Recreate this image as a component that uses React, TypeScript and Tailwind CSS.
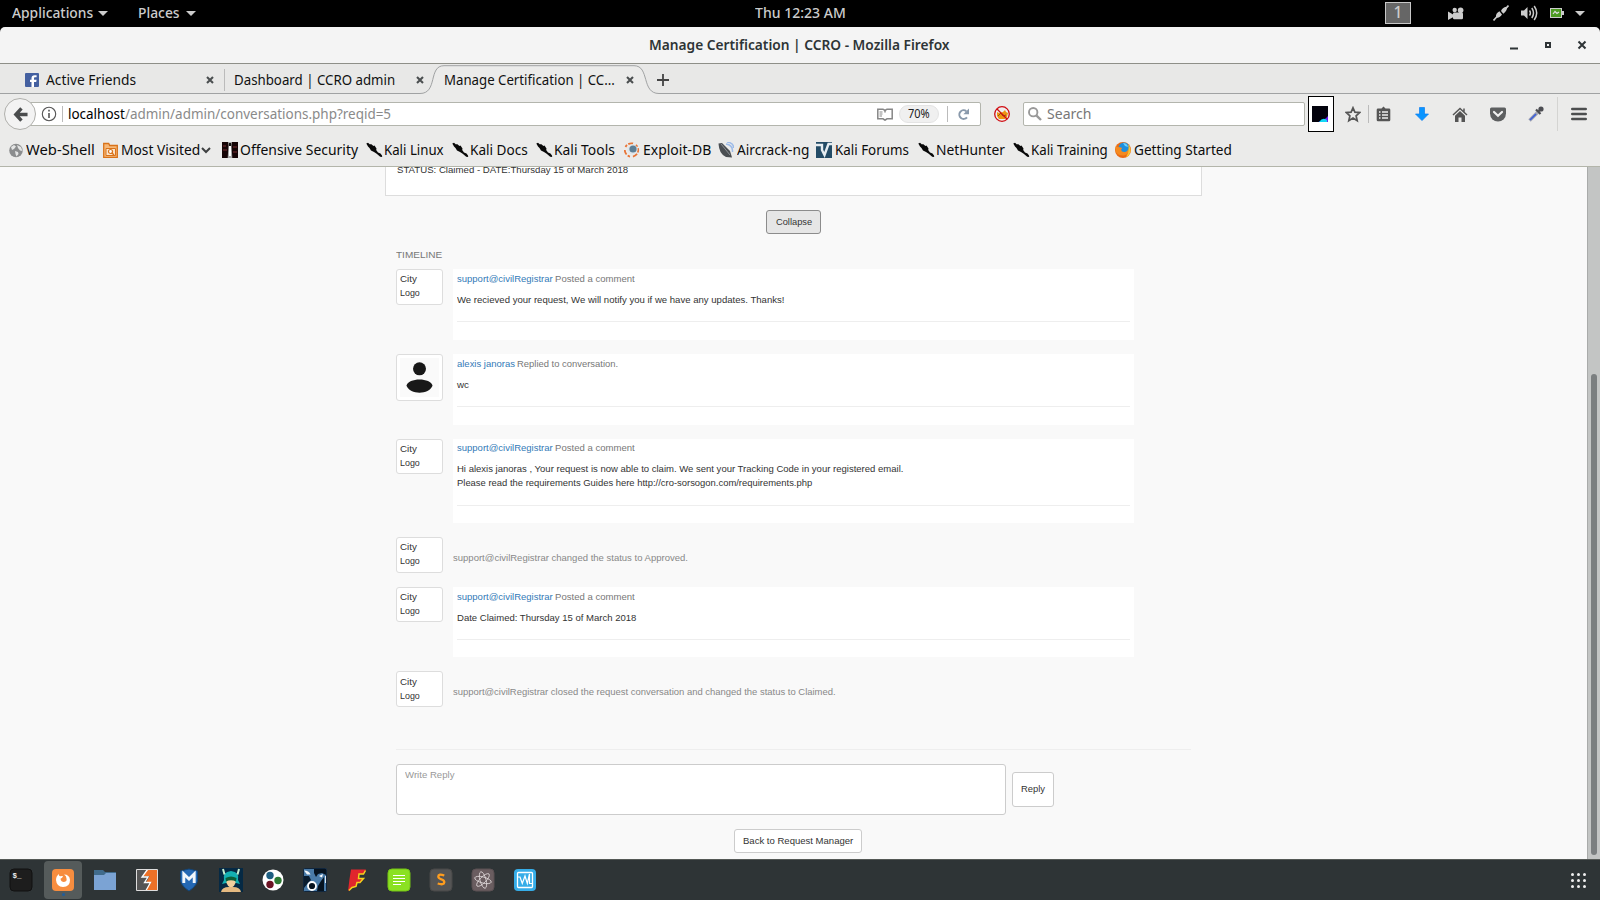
import { useLayoutEffect, useRef, useState } from "react";
import type { ReactNode } from "react";

/* Text squeezed or stretched horizontally so that it occupies exactly `w` pixels. */
function Fit({ w, className = "", children }: { w: number; className?: string; children: ReactNode }) {
  const ref = useRef<HTMLSpanElement>(null);
  const [scale, setScale] = useState(1);
  useLayoutEffect(() => {
    if (ref.current && ref.current.offsetWidth) setScale(w / ref.current.offsetWidth);
  }, [w]);
  return (
    <span className={`block shrink-0 whitespace-nowrap ${className}`} style={{ width: w }}>
      <span ref={ref} className="inline-block origin-left" style={{ transform: `scaleX(${scale})` }}>
        {children}
      </span>
    </span>
  );
}

const Caret = ({ className = "" }: { className?: string }) => (
  <svg className={`h-[5px] w-[10px] shrink-0 ${className}`} viewBox="0 0 10 5"><path d="M0 0h10L5 5z" fill="#ccc" /></svg>
);

function TopBar() {
  return (
    <header className="flex h-[27px] shrink-0 items-center bg-black text-[14.5px] leading-[26px] font-medium text-[#ccc]">
      <Fit w={81} className="-mt-[3px] ml-[12px]">Applications</Fit>
      <Caret className="ml-[5px]" />
      <Fit w={42} className="-mt-[3px] ml-[30px]">Places</Fit>
      <Caret className="ml-[6px]" />
      <Fit w={91} className="-mt-[3px] ml-[559px]">Thu 12:23 AM</Fit>
      <div className="-mt-[1px] ml-[539px] flex h-[22px] w-[26px] items-center justify-center border border-[#c8c8c8] bg-[#666] pb-[2px] text-[15.5px]">1</div>
      <svg className="ml-[37px] h-[14px] w-[16px] shrink-0" viewBox="0 0 16 14" fill="#ccc">
        <circle cx="6.7" cy="3" r="2.2" /><circle cx="12.6" cy="3.2" r="2.8" />
        <rect x="5" y="5.5" width="10" height="6.8" rx="1.2" /><path d="M0 4.5l5.5 3.2v2.2L0 13z" />
      </svg>
      <svg className="-mt-[2px] ml-[29px] h-[16px] w-[16px] shrink-0" viewBox="0 0 16 16">
        <path d="M0.5 15.5L5 10.500M11 5.500L15.500 0.500" stroke="#ccc" strokeWidth="1.600" />
        <path d="M3 12.500c-.4-3 .8-4.600 3.400-6.200l2.600 3.200C7.600 12 5.600 13 3 12.500zM8 6c1-2.500 3-4.200 6.200-4.200C14 5 12.800 7 10.300 8.700z" fill="#ccc" />
      </svg>
      <svg className="-mt-[1px] ml-[12px] h-[16px] w-[17px] shrink-0" viewBox="0 0 17 16" fill="none" stroke="#ccc" strokeWidth="1.500">
        <path d="M0 5.500h3L6.500 2v12L3 10.500H0z" fill="#ccc" stroke="none" />
        <path d="M8.500 5.500q1.800 2.500 0 5M10.800 3q3.400 5 0 10M13.200 1q5 7 0 14" />
      </svg>
      <svg className="-mt-[1px] ml-[12px] h-[10px] w-[14px] shrink-0" viewBox="0 0 14 10">
        <rect x=".5" y=".5" width="11" height="9" fill="#4c9a22" stroke="#ccc" /><rect x="12" y="3" width="2" height="4" fill="#ccc" />
        <path d="M3 6l2-2.500 2 2L9 4" stroke="#ddd" fill="none" strokeWidth="1.200" />
      </svg>
      <Caret className="ml-[11px]" />
    </header>
  );
}

function TitleBar() {
  return (
    <div className="shrink-0 bg-black">
      <div className="flex h-[37px] items-center rounded-t-[5px] border-b border-[#8e8f88] bg-[#f4f4f4]">
        <Fit w={301} className="ml-[649px] text-[14.5px] font-semibold text-[#2e3436]">Manage Certification | CCRO - Mozilla Firefox</Fit>
        <svg className="ml-[560px] h-[10px] w-[77px] shrink-0" viewBox="0 0 77 10" fill="none" stroke="#2e3436" strokeWidth="2">
          <path d="M0 8.500h8" /><rect x="36" y="3" width="4" height="4" /><path d="M68.500 1.500l7 7M75.500 1.500l-7 7" />
        </svg>
      </div>
    </div>
  );
}

const TabClose = ({ className = "" }: { className?: string }) => (
  <svg className={`h-[8px] w-[8px] shrink-0 ${className}`} viewBox="0 0 8 8"><path d="M1 1l6 6M7 1L1 7" stroke="#4b4f50" strokeWidth="2.100" /></svg>
);

function Tabs() {
  return (
    <div className="relative h-[30px] shrink-0 bg-[#e8e8e7]">
      <svg className="absolute inset-0 h-[30px] w-[1600px]" viewBox="0 0 1600 30">
        <path d="M420 30c18 0 10-28.500 24-28.500h190c15 0 9 28.500 25 28.500z" fill="#ebebea" />
        <path d="M0 29.500H420c18 0 8-27.800 24-27.800h190c16 0 7 27.800 25 27.800H1600" fill="none" stroke="#a0a2a3" />
      </svg>
      <div className="relative flex h-[32px] items-center text-[15px] text-[#111]">
        <svg className="ml-[25px] h-[14px] w-[14px] shrink-0" viewBox="0 0 14 14">
          <rect width="14" height="14" rx="1" fill="#4460a0" /><path d="M9 14V9h2.200l.4-2.200H9V5.400c0-.7.3-1.100 1.200-1.100h1.400V2.200H9.700C7.600 2.200 6.500 3.300 6.500 5v1.800H5V9h1.500v5z" fill="#fff" />
        </svg>
        <Fit w={90} className="-mt-[2px] ml-[7px]">Active Friends</Fit>
        <TabClose className="ml-[70px]" />
        <div className="ml-[10px] h-[22px] w-px bg-[#bbb]" />
        <Fit w={161} className="-mt-[2px] ml-[9px]">Dashboard | CCRO admin</Fit>
        <TabClose className="ml-[21px]" />
        <Fit w={171} className="-mt-[2px] ml-[20px]">Manage Certification | CC...</Fit>
        <TabClose className="ml-[11px]" />
        <svg className="ml-[23px] h-[12px] w-[12px]" viewBox="0 0 12 12"><path d="M6 0v12M0 6h12" stroke="#444" strokeWidth="1.800" /></svg>
      </div>
    </div>
  );
}

function NavBar() {
  return (
    <div className="flex h-[40px] shrink-0 items-center">
      <div className="relative z-10 ml-[4px] flex h-[32px] w-[32px] shrink-0 items-center justify-center rounded-full border border-[#b0b0ac] bg-[#f3f3f3]">
        <svg className="h-[15px] w-[15px]" viewBox="0 0 16 16" fill="none" stroke="#4a4c4d" strokeWidth="3.600"><path d="M9 1.500L3 8l6 6.500M3 8h12.500" /></svg>
      </div>
      <div className="-ml-[6px] flex h-[24px] w-[951px] shrink-0 items-center rounded-r-[2px] border border-[#b3b5ad] bg-white">
        <svg className="ml-[10px] h-[16px] w-[16px] shrink-0" viewBox="0 0 16 16"><circle cx="8" cy="8" r="6.700" fill="none" stroke="#555" strokeWidth="1.100" /><path d="M8 3.800v1.700M8 7v5" stroke="#555" strokeWidth="1.600" /></svg>
        <div className="ml-[5px] h-[16px] w-px shrink-0 bg-[#bbb]" />
        <Fit w={323} className="-mt-[2px] ml-[5px] text-[15px] text-[#8a8a8a]"><span className="text-black">localhost</span>/admin/admin/conversations.php?reqid=5</Fit>
        <svg className="ml-[486px] h-[13px] w-[16px] shrink-0" viewBox="0 0 16 13" fill="none" stroke="#868686" strokeWidth="1.500">
          <path d="M.8 1.200H6L8 2.500l2-1.300h5.200v9.600H10L8 12.200 6 10.800H.8zM8 2.500v2" /><path d="M2.500 4h3M2.500 6h3M2.500 8h2.500" strokeWidth="1" />
        </svg>
        <div className="ml-[6px] flex h-[18px] w-[40px] shrink-0 items-center justify-center rounded-full border border-[#e4e4e4] bg-[#f0f0f0] text-[12.500px] text-[#222]"><Fit w={22}>70%</Fit></div>
        <div className="ml-[8px] h-[16px] w-px shrink-0 bg-[#bbb]" />
        <svg className="ml-[9px] h-[13px] w-[13px] shrink-0" viewBox="0 0 13 13"><path d="M9.300 3.200A4.300 4.300 0 1 0 10 9.300" fill="none" stroke="#8999ab" strokeWidth="2" /><path d="M12 .5v5.700H6.300z" fill="#8999ab" /></svg>
      </div>
      <svg className="ml-[13px] h-[16px] w-[16px] shrink-0" viewBox="0 0 16 16">
        <circle cx="8" cy="8" r="7.500" fill="#eee" /><path d="M3 6l2 1 4-1 2-2 1 2 2 1-1 4-2 2H5l-2-3z" fill="#ee9411" /><path d="M4 10l3-3 2 3 3-1" stroke="#8a5515" fill="none" />
        <circle cx="8" cy="8" r="7.300" fill="none" stroke="#d00c12" strokeWidth="1.300" /><path d="M3 3l10 10" stroke="#d00c12" strokeWidth="1.200" />
      </svg>
      <div className="ml-[13px] flex h-[24px] w-[282px] shrink-0 items-center rounded-[2px] border border-[#b3b5ad] bg-white">
        <svg className="ml-[4px] h-[14px] w-[14px] shrink-0" viewBox="0 0 14 14" fill="none" stroke="#999"><circle cx="5.200" cy="5.200" r="4.200" strokeWidth="1.900" /><path d="M8.300 8.300l4.700 4.700" strokeWidth="2.400" /></svg>
        <Fit w={44} className="-mt-[2px] ml-[5px] text-[15px] text-[#777]">Search</Fit>
      </div>
      <div className="ml-[3px] flex h-[36px] w-[26px] shrink-0 items-center border border-black bg-white pl-[3px]">
        <svg className="h-[16px] w-[16px]" viewBox="0 0 16 16"><rect width="16" height="16" fill="#03020c" /><path d="M16 10v6H6q6-1 10-6z" fill="#6a19f0" /><path d="M7 16q3-4 6-3t2 3z" fill="#12d8f5" /></svg>
      </div>
      <svg className="ml-[11px] h-[17px] w-[16px] shrink-0" viewBox="0 0 16 17"><path d="M8 1.800l1.900 4.400 4.800.4-3.600 3.200 1.100 4.900L8 12.100l-4.200 2.600 1.100-4.900L1.300 6.600l4.800-.4z" fill="none" stroke="#555" strokeWidth="1.700" /></svg>
      <div className="ml-[7px] h-[18px] w-px shrink-0 bg-[#bbb]" />
      <svg className="ml-[7px] h-[16px] w-[15px] shrink-0" viewBox="0 0 15 16"><path d="M2 2.500h3.500L7.500.500l2 2H13q1.300 0 1.300 1.200V14q0 1.200-1.300 1.200H2Q.700 15.200.700 14V3.700Q.700 2.500 2 2.500z" fill="#555" /><path d="M3 6h1.500M6 6h6M3 9h1.500M6 9h6M3 12h1.500M6 12h6" stroke="#eee" strokeWidth="1.700" /></svg>
      <svg className="ml-[24px] h-[14px] w-[14px] shrink-0" viewBox="0 0 14 14"><path d="M4.500 .5h5V7h4L7 13.600.5 7h4z" fill="#0a95ff" stroke="#0a7cf0" strokeWidth=".7" /></svg>
      <svg className="ml-[23px] h-[15px] w-[16px] shrink-0" viewBox="0 0 16 15" fill="none" stroke="#555"><path d="M1 8l7-6.500L15 8M12 1.500v3.200" strokeWidth="1.500" /><path d="M3 8.700L8 4l5 4.700V15H9.500v-4.500h-3V15H3z" fill="#555" stroke="none" /></svg>
      <svg className="ml-[22px] h-[15px] w-[16px] shrink-0" viewBox="0 0 16 15"><path d="M1.500 .5h13q1.500 0 1.500 1.500v4.500a8 8 0 0 1-16 0V2Q0 .5 1.500 .5z" fill="#5d5f60" /><path d="M4 5l4 3.700L12 5" stroke="#f0f0f0" strokeWidth="2.200" fill="none" strokeLinecap="round" /></svg>
      <svg className="ml-[22px] h-[16px] w-[16px] shrink-0" viewBox="0 0 16 16"><path d="M1.500 14.500L9.500 6.500" stroke="#a4a6b2" strokeWidth="3.400" /><path d="M2 14l6-6" stroke="#3d5fd8" strokeWidth="1.700" /><path d="M8 3.500l4.500 4.500M10 6l4-4" stroke="#4c4d52" strokeWidth="2.200" /><circle cx="13" cy="3" r="2.600" fill="#4c4d52" /></svg>
      <div className="ml-[13px] h-[34px] w-px shrink-0 bg-[#d4d4d2]" />
      <svg className="ml-[13px] h-[14px] w-[16px] shrink-0" viewBox="0 0 16 14"><path d="M1.300 2h13.400M1.300 7h13.400M1.300 12h13.400" stroke="#4c4e4f" strokeWidth="2.600" strokeLinecap="round" /></svg>
    </div>
  );
}

const Kali = () => (
  <svg className="h-[16px] w-[17px] shrink-0" viewBox="0 0 17 16">
    <path d="M.3 1.500L2 .8l2 1.700 1-.6 2.500 2 1-.4 2 3-.3 1.500 1.800 2.500 2.500 1 1.500 2 .2 1.500-2-.3-3.500-3-2.700-1.800-3-1.500L3.500 6 2 4.500z" fill="#090909" />
  </svg>
);

const bookmarks: { label: string; w: number; gap: number; icon: ReactNode }[] = [
  { label: "Web-Shell", w: 69, gap: 9, icon: (
    <svg className="mr-[1px] h-[15px] w-[15px]" viewBox="0 0 15 15"><circle cx="7" cy="7.500" r="6.800" fill="#8b8d8e" /><path d="M2 4l3-2 2 1.500L5 6 3 7zM8 2l4 2 1.500 4L11 7.500 9 5zM6 8l3 1 .5 2-2 2.500-1-2.500z" fill="#e4e5e5" /></svg>) },
  { label: "Most Visited", w: 79, gap: 8, icon: (
    <svg className="mr-[2px] h-[16px] w-[15px]" viewBox="0 0 15 16"><path d="M.7 1.500h5l1 2h7.600v11.800H.7z" fill="#f6b878" stroke="#d9731a" strokeWidth="1.300" /><path d="M3 6.500h9.500v7H3z" fill="#fbe4ca" stroke="#d9731a" /><circle cx="7.500" cy="9.500" r="2" fill="#fff" stroke="#d9731a" strokeWidth="1.200" /><path d="M9 11l2 2" stroke="#d9731a" strokeWidth="1.400" /></svg>) },
  { label: "Offensive Security", w: 118, gap: 11, icon: (
    <svg className="mr-[1px] h-[16px] w-[16px]" viewBox="0 0 16 16"><rect width="16" height="16" fill="#160506" /><path d="M1 4h3M1 8h4M11 5h4M11 10h4" stroke="#5a2226" strokeWidth="1.500" /><path d="M6 0h4L9.500 3l.8 13H5.700l.8-13z" fill="#aaa" /><path d="M7 3.500h2V14H7z" fill="#fff" /><path d="M7 1h2v3H7z" fill="#111" /></svg>) },
  { label: "Kali Linux", w: 60, gap: 8, icon: <Kali /> },
  { label: "Kali Docs", w: 58, gap: 8, icon: <Kali /> },
  { label: "Kali Tools", w: 61, gap: 8, icon: <Kali /> },
  { label: "Exploit-DB", w: 68, gap: 9, icon: (
    <svg className="mr-[2px] h-[16px] w-[16px]" viewBox="0 0 16 16"><circle cx="7.500" cy="8" r="6.700" fill="none" stroke="#e87537" strokeWidth="1.800" strokeDasharray="2.500 1.500 5 3" /><circle cx="8.500" cy="7.500" r="5" fill="#dfe6ea" /><circle cx="9" cy="7" r="3.600" fill="#5d7f96" /></svg>) },
  { label: "Aircrack-ng", w: 72, gap: 7, icon: (
    <svg className="mr-[2px] h-[16px] w-[16px]" viewBox="0 0 16 16"><path d="M8 2q7 1 6.500 8M9 0q7 1 6.500 6" stroke="#9dbbe8" strokeWidth="1.500" fill="none" /><path d="M.5 1.500L4 1l8 8 2 6.500-6-.5Q1 12 .5 1.500z" fill="#4a4e52" /><path d="M3 2l9 11" stroke="#8a8e92" /></svg>) },
  { label: "Kali Forums", w: 74, gap: 7, icon: (
    <svg className="mr-[2px] h-[16px] w-[16px]" viewBox="0 0 16 16"><rect width="16" height="16" fill="#234b66" /><path d="M0 3h6v5l2.500 5L12.500 2H16" fill="none" stroke="#e6edf2" strokeWidth="2.400" /></svg>) },
  { label: "NetHunter", w: 69, gap: 9, icon: <Kali /> },
  { label: "Kali Training", w: 77, gap: 8, icon: <Kali /> },
  { label: "Getting Started", w: 98, gap: 7, icon: (
    <svg className="mr-[2px] h-[16px] w-[16px]" viewBox="0 0 16 16"><circle cx="8" cy="8" r="8" fill="#ea6a14" /><circle cx="9" cy="6" r="5.500" fill="#1e8fdd" /><path d="M8 1q4 0 5 4l-3-1z" fill="#6fd0f7" /><path d="M1 3q0 2 2 2l3 .5q2 .5 0 2 .5 3 4 2.500 3-.5 3.500-4.500Q15 12 9 13.500 2 14 .3 8.500z" fill="#f58a1f" /><path d="M13 2q4 5 2 9-1 3-4 4 4-5 2-13z" fill="#fbc52d" /></svg>) },
];

function Bookmarks() {
  return (
    <div className="flex h-[32px] shrink-0 items-center text-[15px] text-[#0c0c0c]">
      {bookmarks.map((b) => (
        <div key={b.label} className="flex shrink-0 items-center" style={{ marginLeft: b.gap }}>
          <span className="mr-px block shrink-0">{b.icon}</span>
          <Fit w={b.w} className="-mt-[2px]">{b.label}</Fit>
          {b.label === "Most Visited" && <svg className="ml-[1px] h-[7px] w-[10px]" viewBox="0 0 10 7"><path d="M1 1l4 4 4-4" fill="none" stroke="#3e4041" strokeWidth="2" /></svg>}
        </div>
      ))}
    </div>
  );
}

const Logo = ({ h = "h-[36px]", pad = "pt-[2px]" }: { h?: string; pad?: string }) => (
  <div className={`w-[47px] shrink-0 rounded-[3px] border border-[#ddd] bg-white pl-[3px] ${h} ${pad}`}>
    <Fit w={17}>City</Fit>
    <Fit w={20}>Logo</Fit>
  </div>
);

const Avatar = () => (
  <div className="h-[47px] w-[47px] shrink-0 rounded-[3px] border border-[#ddd] bg-white p-[3px]">
    <svg className="h-[39px] w-[39px] bg-[#fafafa]" viewBox="0 0 39 39" fill="#181818"><circle cx="19.500" cy="10.800" r="6.500" /><path d="M6.500 27.800C8 19.500 31 19.500 32.500 27.800 29 37 10 37 6.500 27.800z" /></svg>
  </div>
);

type PostProps = { h: string; who: string; whoW: number; act: string; actW: number; lines: [string, number][]; pad?: string; rule?: string };
function Post({ h, who, whoW, act, actW, lines, pad = "pt-[3px]", rule = "mt-[14px]" }: PostProps) {
  return (
    <div className={`w-[681px] bg-white px-[4px] ${h} ${pad}`}>
      <div className="flex gap-[2px]">
        <Fit w={whoW} className="text-[#337ab7]">{who}</Fit>
        <Fit w={actW} className="text-[#777]">{act}</Fit>
      </div>
      <div className="mt-[7px]">{lines.map(([t, w]) => <Fit key={t} w={w}>{t}</Fit>)}</div>
      <div className={`h-px bg-[#eee] ${rule}`} />
    </div>
  );
}

function Page() {
  return (
    <main className="flex min-h-0 flex-1 overflow-hidden bg-[#f9f9f9] font-['Liberation_Sans',sans-serif] text-[9.8px] leading-[14px] text-[#333]">
      <div className="ml-[385px] flex w-[817px] shrink-0 flex-col">
        <div className="h-[29px] shrink-0 border-x border-b border-[#ddd] bg-white pl-[11px]">
          <Fit w={231} className="-mt-[4px]">STATUS: Claimed - DATE:Thursday 15 of March 2018</Fit>
        </div>
        <button className="mt-[14px] ml-[381px] flex h-[24px] w-[55px] shrink-0 items-center justify-center rounded-[3px] border border-[#8c8c8c] bg-[#e6e6e6]"><Fit w={36}>Collapse</Fit></button>
        <Fit w={46} className="mt-[14px] ml-[11px] text-[#777]">TIMELINE</Fit>
        <section className="mt-[7px] ml-[11px] flex flex-col gap-[14px]">
          <div className="flex gap-[10px]"><Logo /><Post h="h-[71px]" who="support@civilRegistrar" whoW={96} act="Posted a comment" actW={80} lines={[["We recieved your request, We will notify you if we have any updates. Thanks!", 327]]} /></div>
          <div className="flex gap-[10px]"><Avatar /><Post h="h-[71px]" who="alexis janoras" whoW={58} act="Replied to conversation." actW={101} lines={[["wc", 12]]} /></div>
          <div className="flex gap-[10px]"><Logo h="h-[35px]" /><Post h="h-[84px]" who="support@civilRegistrar" whoW={96} act="Posted a comment" actW={80} pad="pt-[2px]" rule="mt-[15px]" lines={[["Hi alexis janoras , Your request is now able to claim. We sent your Tracking Code in your registered email.", 446], ["Please read the requirements Guides here http://cro-sorsogon.com/requirements.php", 355]]} /></div>
          <div className="flex gap-[10px] text-[#888]"><div className="text-[#333]"><Logo /></div><Fit w={235} className="mt-[14px]">support@civilRegistrar changed the status to Approved.</Fit></div>
          <div className="flex gap-[10px]"><Logo h="h-[35px]" /><Post h="h-[70px]" who="support@civilRegistrar" whoW={96} act="Posted a comment" actW={80} lines={[["Date Claimed: Thursday 15 of March 2018", 179]]} /></div>
          <div className="flex gap-[10px] text-[#888]"><div className="text-[#333]"><Logo pad="pt-[3px]" /></div><Fit w={383} className="mt-[14px]">support@civilRegistrar closed the request conversation and changed the status to Claimed.</Fit></div>
        </section>
        <div className="mt-[42px] ml-[11px] h-px w-[795px] shrink-0 bg-[#eee]" />
        <div className="mt-[14px] ml-[11px] flex shrink-0 gap-[6px]">
          <div className="h-[51px] w-[610px] rounded-[3px] border border-[#ccc] bg-white pt-[3px] pl-[8px] text-[#999]"><Fit w={49}>Write Reply</Fit></div>
          <button className="mt-[8px] flex h-[35px] w-[42px] items-center justify-center rounded-[3px] border border-[#ccc] bg-white pb-[1px]"><Fit w={24}>Reply</Fit></button>
        </div>
        <button className="mt-[14px] ml-[349px] flex h-[24px] w-[128px] shrink-0 items-center justify-center rounded-[3px] border border-[#ccc] bg-white"><Fit w={110}>Back to Request Manager</Fit></button>
      </div>
      <div className="ml-auto w-[13px] border-l border-[#a9abaa] bg-[#c3c5c4] pt-[207px] pl-[3px]"><div className="h-[481px] w-[6px] rounded-full bg-[#7b7f80]" /></div>
    </main>
  );
}

const ico = "h-[24px] w-[24px]";
const dock: ReactNode[] = [
  <svg className={ico} viewBox="0 0 24 24"><rect x="1" y="1" width="22" height="22" rx="4" fill="#1d1d1d" stroke="#111" /><text x="3.500" y="10" fontSize="7.500" fontWeight="700" fill="#eee" fontFamily="Liberation Mono">$_</text></svg>,
  <svg className={ico} viewBox="0 0 24 24"><rect x="1" y="1" width="22" height="22" rx="4" fill="#f78d3f" /><path d="M5 12q0-4 3-6-.5 2 1 2.300 1.500-.5 3-.3-.5 2-2.500 2.700.5 3.300 3.500 3.300 3.300-.5 2.500-3.500 0-2.500-2.500-4 5.500 0 6 5.500 0 7-7 7-6.500-.5-7-7z" fill="#fff" /></svg>,
  <svg className={ico} viewBox="0 0 24 24"><path d="M1 2h9l2 2h11v18H1z" fill="#406b8c" /><path d="M1 7h10l2-2h10v17H1z" fill="#7ba3d4" /></svg>,
  <svg className={ico} viewBox="0 0 24 24"><path d="M1.500 1.500h21v21h-21z" fill="#555" /><path d="M12.500 2H22v20H11l5.500-8h-5l3-6H8z" fill="#ed7127" /><path d="M12.500 1.500L7 9h6l-3.500 5.500h6l-4.500 8" fill="none" stroke="#fff" strokeWidth="1.300" /><path d="M1.500 1.500h21v21h-21z" fill="none" stroke="#ddd" /></svg>,
  <svg className={ico} viewBox="0 0 24 24"><path d="M12 1l8.500 2v10q-1 5-8.500 10-7.500-5-8.500-10V3z" fill="#2468b4" stroke="#124579" /><path d="M6.800 15V6l5.200 5 5.200-5v9" fill="none" stroke="#f1f6fb" strokeWidth="2.900" /></svg>,
  <svg className={ico} viewBox="0 0 24 24"><rect width="24" height="24" fill="#052944" /><path d="M5 12Q3 4 12 3q9 1 7 9l2 4-4-1H7l-4 1z" fill="#13b0b2" /><path d="M4 1l1.500 5.500M20 1l-1.500 5.500" stroke="#c8efd0" strokeWidth="2" /><path d="M7.500 11h9v4q-1 3.500-4.500 5-3.500-1.500-4.500-5z" fill="#f2cf9d" /><path d="M6.500 10q5.500-3 11 0l-.5 3.500q-5-2.500-10 0z" fill="#0c5f3a" /><path d="M2 24q1-5 8-5h4q7 0 8 5z" fill="#e4b981" /></svg>,
  <svg className={ico} viewBox="0 0 24 24"><circle cx="12" cy="12" r="10.500" fill="#fff" /><circle cx="9" cy="7.500" r="3.700" fill="#1f5f82" /><circle cx="17" cy="12.500" r="3.700" fill="#2d7a34" /><circle cx="9" cy="16.500" r="3.700" fill="#6c1425" /></svg>,
  <svg className={ico} viewBox="0 0 24 24"><rect x=".5" y=".5" width="23" height="23" rx="1" fill="#4a7ba8" stroke="#10253c" /><path d="M11 1h12v6l-4-2-4 1-2 3-2-4zM21 9v14h-7l1-5 3-5z" fill="#061320" /><path d="M1 8l5 0 2 4-3 3-4 5z" fill="#0a1c2e" /><path d="M1 2.500q5 0 6.500 4L4 6.500z" fill="#f2f5f8" /><circle cx="9" cy="18" r="4" fill="#07121d" stroke="#fff" strokeWidth="1.800" /><path d="M16 8l4-2-1 3.500z" fill="#fff" /><path d="M22.500 8v7" stroke="#dfe8f0" /></svg>,
  <svg className={ico} viewBox="0 0 24 24"><path d="M6 1.500h15l-2.500 4.500h-4.500l-.5 4.500h5l-3.500 4h-3l-1 4-4 1-4 3.500 1.500-12z" fill="#e1252d" /><path d="M20.500 2.500L18.500 6h-4.500l-.5 4.500h5l-3.500 4h-3l-1 4-4 1-3 3" fill="none" stroke="#f6d21c" strokeWidth="1.500" /></svg>,
  <svg className={ico} viewBox="0 0 24 24"><rect x="1" y="1" width="22" height="22" rx="4" fill="#8be122" stroke="#74c415" /><path d="M6 7.500h12M6 10.500h12M6 13.500h12M6 16.500h8" stroke="#fff" strokeWidth="1.200" /></svg>,
  <svg className={ico} viewBox="0 0 24 24"><rect x="1" y="1" width="22" height="22" rx="4" fill="#555" stroke="#484848" /><path d="M15.300 7.500q-6-2-6 1 0 1.700 3 2.800 3.200 1.300 3 3-.5 3.200-6.600 1.200" fill="none" stroke="#ff9d1e" strokeWidth="2.300" /></svg>,
  <svg className={ico} viewBox="0 0 24 24"><rect x="1" y="1" width="22" height="22" rx="4" fill="#6a5d60" stroke="#5b5053" /><g fill="none" stroke="#d6cfd0" strokeWidth=".9"><ellipse cx="12" cy="12" rx="8.500" ry="3" transform="rotate(15 12 12)" /><ellipse cx="12" cy="12" rx="8.500" ry="3" transform="rotate(75 12 12)" /><ellipse cx="12" cy="12" rx="8.500" ry="3" transform="rotate(135 12 12)" /></g></svg>,
  <svg className={ico} viewBox="0 0 24 24"><rect x="1" y="1" width="22" height="22" rx="4" fill="#36ade8" /><rect x="4.500" y="4.500" width="15" height="15" rx="1" fill="none" stroke="#fff" strokeWidth="1.300" /><path d="M4.500 9H7l2.300 6.500L12 8l2.300 7.500L16.500 6v9.500h3" fill="none" stroke="#fff" strokeWidth="1.200" /></svg>,
];

function Dock() {
  return (
    <footer className="flex h-[41px] shrink-0 items-center border-t border-[#555956] bg-[#2e3436]">
      {dock.map((icon, i) => (
        <div key={i} className={i === 1 ? "relative mx-[2px] flex h-[38px] w-[38px] shrink-0 items-center justify-center rounded-[4px] bg-[#555b5b]" : "flex w-[42px] shrink-0 items-center justify-center"}>
          {icon}
          {i === 1 && <span className="absolute bottom-[3px] left-[18px] h-[3px] w-[3px] rounded-full bg-[#215d9c]" />}
        </div>
      ))}
      <div className="mr-[14px] ml-auto grid grid-cols-3 gap-[3px]">
        {Array.from({ length: 9 }, (_, i) => <span key={i} className="h-[3px] w-[3px] rounded-full bg-[#f0f0f0]" />)}
      </div>
    </footer>
  );
}

export default function App() {
  return (
    <div className="flex h-[900px] w-[1600px] flex-col overflow-hidden font-['Noto_Sans',sans-serif]">
      <TopBar />
      <TitleBar />
      <Tabs />
      <div className="flex h-[73px] shrink-0 flex-col border-b border-[#b3b5aa] bg-[#ebebea]">
        <NavBar />
        <Bookmarks />
      </div>
      <Page />
      <Dock />
    </div>
  );
}
